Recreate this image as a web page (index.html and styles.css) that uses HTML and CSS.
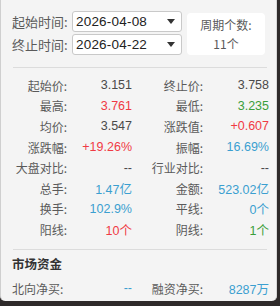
FILE: index.html
```html
<!DOCTYPE html>
<html>
<head>
<meta charset="utf-8">
<link rel="stylesheet" href="styles.css">
</head>
<body>
<div class="panel">
  <div class="top">
    <div class="dates">
      <div class="date-row">
        <span class="dlabel">起始时间:</span>
        <div class="select"><span>2026-04-08</span><i class="arrow"></i></div>
      </div>
      <div class="date-row">
        <span class="dlabel">终止时间:</span>
        <div class="select"><span>2026-04-22</span><i class="arrow"></i></div>
      </div>
    </div>
    <div class="period">
      <div>周期个数:</div>
      <div>11个</div>
    </div>
  </div>
  <div class="sep"></div>
  <div class="grid">
    <span class="lab">起始价:</span><span class="val">3.151</span>
    <span class="lab">终止价:</span><span class="val">3.758</span>
    <span class="lab">最高:</span><span class="val red">3.761</span>
    <span class="lab">最低:</span><span class="val green">3.235</span>
    <span class="lab">均价:</span><span class="val">3.547</span>
    <span class="lab">涨跌值:</span><span class="val red">+0.607</span>
    <span class="lab">涨跌幅:</span><span class="val red">+19.26%</span>
    <span class="lab">振幅:</span><span class="val blue">16.69%</span>
    <span class="lab">大盘对比:</span><span class="val">--</span>
    <span class="lab">行业对比:</span><span class="val">--</span>
    <span class="lab">总手:</span><span class="val blue">1.47亿</span>
    <span class="lab">金额:</span><span class="val blue">523.02亿</span>
    <span class="lab">换手:</span><span class="val blue">102.9%</span>
    <span class="lab">平线:</span><span class="val blue">0个</span>
    <span class="lab">阳线:</span><span class="val red">10个</span>
    <span class="lab">阴线:</span><span class="val green">1个</span>
  </div>
  <div class="sep sep2"></div>
  <div class="section">市场资金</div>
  <div class="grid grid2">
    <span class="lab left">北向净买:</span><span class="val blue">--</span>
    <span class="lab">融资净买:</span><span class="val blue">8287万</span>
  </div>
</div>
</body>
</html>
```
FILE: styles.css
```css
html, body {
  margin: 0;
  padding: 0;
}
body {
  width: 280px;
  height: 306px;
  background: #2e2a2a;
  font-family: "Liberation Sans", "Noto Sans CJK SC", sans-serif;
  font-size: 12px;
  color: #444;
  overflow: hidden;
}
.panel {
  box-sizing: border-box;
  width: 277px;
  height: 301px;
  background: #f4f4f4;
  border-left: 1px solid #cfcfcf;
  border-right: 1px solid #d8d8d8;
  border-radius: 0 0 5px 5px;
  padding: 11px 9px 0 11px;
}
.top {
  display: flex;
  align-items: flex-start;
}
.dates {
  display: flex;
  flex-direction: column;
  gap: 3px;
}
.date-row {
  display: flex;
  align-items: center;
  height: 20px;
}
.dlabel {
  width: 60px;
  font-family: "Noto Sans CJK SC", sans-serif;
  font-size: 13px;
  color: #5a5a5a;
}
.select {
  box-sizing: border-box;
  width: 110px;
  height: 21px;
  background: #fff;
  border: 1px solid #c9c9c9;
  border-radius: 3px;
  display: flex;
  align-items: center;
  justify-content: space-between;
  padding: 0 6px 0 3px;
  font-size: 13.5px;
  color: #222;
  letter-spacing: 0.2px;
}
.arrow {
  width: 0;
  height: 0;
  border-left: 4px solid transparent;
  border-right: 4px solid transparent;
  border-top: 5px solid #333;
}
.period {
  margin-left: 5px;
  margin-top: 2px;
  width: 78px;
  height: 42px;
  background: #fff;
  border-radius: 4px;
  display: flex;
  flex-direction: column;
  align-items: center;
  justify-content: center;
  gap: 3px;
  color: #5a5a5a;
  font-family: "Noto Sans CJK SC", sans-serif;
  font-size: 12px;
  line-height: 16px;
}
.sep {
  height: 1px;
  background: #dcdcdc;
  margin: 12px 0 7px 1px;
}
.sep2 {
  margin: 9px 0 6px 1px;
}
.grid {
  display: grid;
  grid-template-columns: 55px 65px 71px 66px;
  grid-auto-rows: 20.6px;
  align-items: center;
  font-size: 12.5px;
}
.lab {
  text-align: right;
  font-family: "Noto Sans CJK SC", sans-serif;
  color: #5a5a5a;
  font-size: 12px;
}
.val {
  text-align: right;
  color: #4a4a4a;
}
.red { color: #f03a44; }
.green { color: #3a9e3a; }
.blue { color: #3b9fd0; }
.section {
  font-family: "Noto Sans CJK SC", sans-serif;
  font-weight: bold;
  font-size: 12.5px;
  color: #333;
  line-height: 16px;
  margin-bottom: 6px;
}
.grid2 {
  grid-template-columns: 60px 60px 71px 66px;
}
.grid2 .left {
  text-align: left;
}
```
